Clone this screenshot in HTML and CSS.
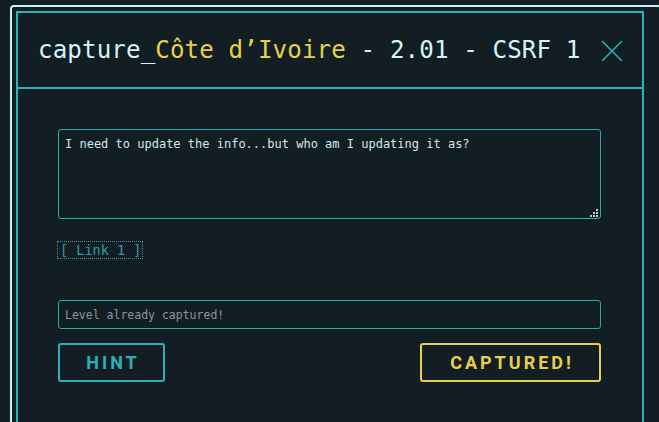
FILE: index.html
```html
<!DOCTYPE html>
<html>
<head>
<meta charset="utf-8">
<link rel="stylesheet" href="styles.css">
</head>
<body>
<div class="outer">
  <div class="modal">
    <div class="header">
      <h1 class="title">capture_<span class="country">Côte d’Ivoire</span> - 2.01 - CSRF 1</h1>
      <svg class="close" width="22" height="22" viewBox="0 0 22 22"><path d="M1 1 L21 21 M21 1 L1 21" stroke="#2aaeb0" stroke-width="1.6" fill="none"/></svg>
    </div>
    <div class="content">
      <div class="desc-wrap">
        <textarea class="desc" readonly>I need to update the info...but who am I updating it as?</textarea>
        <svg class="grip" width="9" height="9" viewBox="0 0 9 9"><g fill="#c3cdd0"><rect x="7" y="1" width="2" height="2"/><rect x="4" y="4" width="2" height="2"/><rect x="7" y="4" width="2" height="2"/><rect x="1" y="7" width="2" height="2"/><rect x="4" y="7" width="2" height="2"/><rect x="7" y="7" width="2" height="2"/></g></svg>
      </div>
      <div class="links"><a class="link" href="#">[ Link 1 ]</a></div>
      <input class="flag" type="text" placeholder="Level already captured!">
      <div class="actions">
        <button class="btn hint">HINT</button>
        <button class="btn captured">CAPTURED!</button>
      </div>
    </div>
  </div>
</div>
</body>
</html>
```
FILE: styles.css
```css
html, body {
  margin: 0;
  padding: 0;
  background: #121e24;
  height: 100%;
  overflow: hidden;
}
.outer {
  margin: 5px 0 0 10px;
  width: 638px;
  height: 600px;
  border: 2px solid #c6f2f6;
  border-radius: 4px 4px 0 0;
  padding: 4px 6px 0 4px;
  box-sizing: content-box;
}
.modal {
  width: 624px;
  height: 594px;
  border: 2px solid #2bb3bb;
  border-bottom: none;
}
.header {
  height: 74px;
  border-bottom: 2px solid #2bb3bb;
  display: flex;
  align-items: center;
  padding: 0 19px 0 20px;
}
.title {
  margin: 0;
  font-family: "DejaVu Sans Mono", monospace;
  font-weight: normal;
  font-size: 24.2px;
  color: #d6f4f7;
  white-space: nowrap;
  letter-spacing: 0.1px;
}
.country {
  color: #e6d14b;
}
.close {
  margin-left: auto;
  margin-top: 1px;
}
.content {
  padding: 40px 41px 0 40px;
  display: flex;
  flex-direction: column;
}
.desc-wrap {
  position: relative;
}
.desc {
  display: block;
  width: 100%;
  height: 90px;
  box-sizing: border-box;
  margin: 0;
  background: #121e24;
  border: 1px solid #2ba9b0;
  border-radius: 3px;
  color: #d3e9eb;
  font-family: "DejaVu Sans Mono", monospace;
  font-size: 12px;
  line-height: 14px;
  padding: 7px 6px;
  outline: none;
  resize: none;
}
.grip {
  position: absolute;
  right: 3px;
  bottom: 2px;
}
.links {
  margin-top: 22px;
  display: flex;
}
.link {
  margin-left: -1px;
  font-family: "DejaVu Sans Mono", monospace;
  font-size: 13.5px;
  line-height: 16px;
  color: #2a9da5;
  text-decoration: none;
  border: 1px dotted #4d8e94;
  padding: 0 1px 0 2px;
}
.flag {
  margin-top: 41px;
  display: block;
  width: 100%;
  height: 29px;
  box-sizing: border-box;
  background: #121e24;
  border: 1px solid #2ba9b0;
  border-radius: 3px;
  padding: 0 6px;
  font-family: "DejaVu Sans Mono", monospace;
  font-size: 11.5px;
  color: #d3e9eb;
  outline: none;
}
.flag::placeholder {
  color: #8a979a;
}
.actions {
  margin-top: 14px;
  display: flex;
  justify-content: space-between;
}
.btn {
  height: 39px;
  box-sizing: border-box;
  background: transparent;
  border: 2px solid;
  border-radius: 3px;
  font-family: Roboto, "Liberation Sans", sans-serif;
  font-weight: bold;
  font-size: 18px;
  letter-spacing: 3px;
  padding: 0 0 0 3px;
  cursor: pointer;
}
.hint {
  width: 107px;
  color: #2bb0b8;
  border-color: #2bb0b8;
}
.captured {
  width: 181px;
  color: #e6d04a;
  border-color: #e6d04a;
}
```
